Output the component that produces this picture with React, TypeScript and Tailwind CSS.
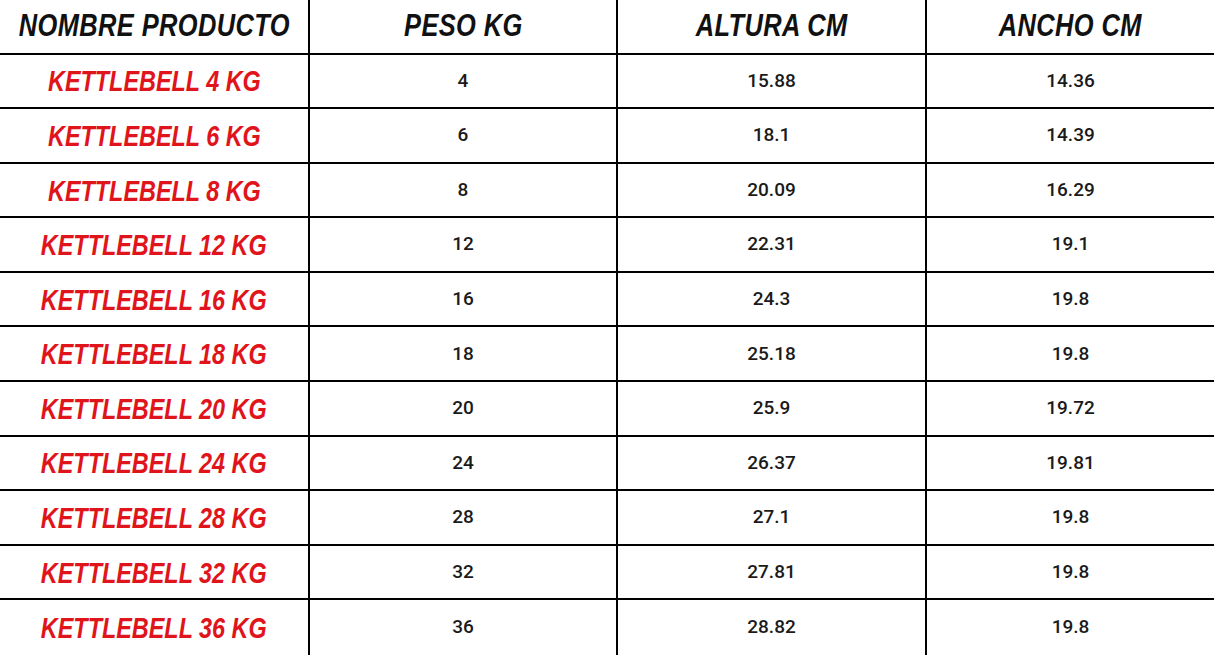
import React from 'react';

const rows = [
  ['KETTLEBELL 4 KG', '4', '15.88', '14.36'],
  ['KETTLEBELL 6 KG', '6', '18.1', '14.39'],
  ['KETTLEBELL 8 KG', '8', '20.09', '16.29'],
  ['KETTLEBELL 12 KG', '12', '22.31', '19.1'],
  ['KETTLEBELL 16 KG', '16', '24.3', '19.8'],
  ['KETTLEBELL 18 KG', '18', '25.18', '19.8'],
  ['KETTLEBELL 20 KG', '20', '25.9', '19.72'],
  ['KETTLEBELL 24 KG', '24', '26.37', '19.81'],
  ['KETTLEBELL 28 KG', '28', '27.1', '19.8'],
  ['KETTLEBELL 32 KG', '32', '27.81', '19.8'],
  ['KETTLEBELL 36 KG', '36', '28.82', '19.8'],
];

const headers = ['NOMBRE PRODUCTO', 'PESO KG', 'ALTURA CM', 'ANCHO CM'];

export default function App() {
  return (
    <div className="w-[1214px] h-[655px] bg-white overflow-hidden">
      <div className="grid grid-cols-[310px_308px_309px_1fr] grid-rows-12 h-full">
        {headers.map((h, i) => (
          <div
            key={h}
            className={`flex items-center justify-center border-b-2 border-black ${i < 3 ? 'border-r-2' : ''}`}
          >
            <span className="whitespace-nowrap scale-x-[0.82] tracking-[0.5px] font-['Liberation_Sans',sans-serif] font-bold italic text-[31px] text-[#111]">
              {h}
            </span>
          </div>
        ))}
        {rows.map((r, ri) =>
          r.map((c, ci) => (
            <div
              key={`${ri}-${ci}`}
              className={`flex items-center justify-center border-black ${ri < rows.length - 1 ? 'border-b-2' : ''} ${ci < 3 ? 'border-r-2' : ''}`}
            >
              {ci === 0 ? (
                <span className="whitespace-nowrap scale-x-[0.78] font-['Liberation_Sans',sans-serif] font-bold italic text-[30px] text-[#e0141b]">
                  {c}
                </span>
              ) : (
                <span className="whitespace-nowrap font-['Roboto',sans-serif] font-medium text-[19px] text-[#1a1a1a]">
                  {c}
                </span>
              )}
            </div>
          ))
        )}
      </div>
    </div>
  );
}
